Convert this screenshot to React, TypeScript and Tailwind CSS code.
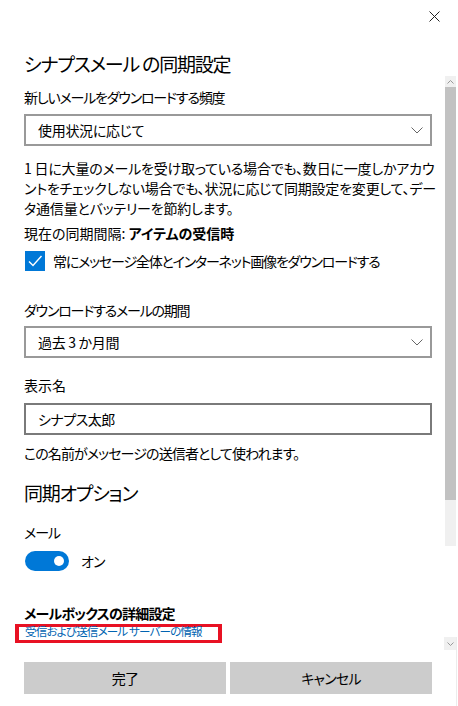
import React, { useState } from "react";

const jp = "font-['Noto_Sans_CJK_JP','Noto_Sans',sans-serif] [font-feature-settings:'palt']";

function Chevron() {
  return (
    <svg width="12" height="7" viewBox="0 0 12 7" fill="none">
      <path d="M0.5 0.5 L6 6 L11.5 0.5" stroke="#666" strokeWidth="1" />
    </svg>
  );
}

function Select({ value }: { value: string }) {
  return (
    <div className="flex h-8 w-[408px] items-center justify-between border-2 border-[#999] bg-white pl-3 pr-[7px]">
      <span className="text-[14px] leading-5 tracking-[-0.3px] text-black">{value}</span>
      <Chevron />
    </div>
  );
}

export default function App() {
  const [checked, setChecked] = useState(true);
  const [mailOn, setMailOn] = useState(true);
  const [name, setName] = useState("シナプス太郎");

  return (
    <div className={`relative h-[706px] w-[458px] overflow-hidden bg-white text-black ${jp}`}>
      {/* close */}
      <div className="flex h-[33px] items-center justify-end pr-[18px]">
        <svg width="11" height="11" viewBox="0 0 11 11" fill="none">
          <path d="M0.5 0.5 L10.5 10.5 M10.5 0.5 L0.5 10.5" stroke="#222" strokeWidth="1" />
        </svg>
      </div>

      <div className="flex flex-col px-6">
        <h1 className="mt-[17px] text-[19px] leading-[28px] tracking-[-1.2px] font-normal">シナプスメール の同期設定</h1>

        <p className="mt-[9px] text-[14px] leading-5 tracking-[-1.2px]">新しいメールをダウンロードする頻度</p>
        <div className="mt-[7px]">
          <Select value="使用状況に応じて" />
        </div>

        <p className="mt-3 text-[14px] leading-5 tracking-[-0.2px] whitespace-nowrap">
          1 日に大量のメールを受け取っている場合でも、数日に一度しかアカウ
          <br />
          ントをチェックしない場合でも、状況に応じて同期設定を変更して、デー
          <br />
          タ通信量とバッテリーを節約します。
        </p>

        <p className="mt-[5px] text-[14px] leading-5">
          現在の同期間隔: <span className="font-bold">アイテムの受信時</span>
        </p>

        <label className="mt-2 flex items-center gap-2 cursor-pointer">
          <button
            type="button"
            onClick={() => setChecked((c) => !c)}
            className={`ml-px flex h-5 w-5 items-center justify-center ${checked ? "bg-[#0078d7]" : "border-2 border-[#333] bg-white"}`}
          >
            {checked && (
              <svg width="20" height="20" viewBox="0 0 20 20" fill="none">
                <path d="M4 10.5 L8 14.5 L16.5 5" stroke="#fff" strokeWidth="1.4" />
              </svg>
            )}
          </button>
          <span className="text-[14px] leading-5 tracking-[-1.2px]">常にメッセージ全体とインターネット画像をダウンロードする</span>
        </label>

        <p className="mt-[29px] text-[14px] leading-5 tracking-[-1.2px]">ダウンロードするメールの期間</p>
        <div className="mt-[6px]">
          <Select value="過去 3 か月間" />
        </div>

        <p className="mt-[17px] text-[14px] leading-5">表示名</p>
        <input
          value={name}
          onChange={(e) => setName(e.target.value)}
          className={`mt-2 h-8 w-[408px] border-2 border-[#7a7a7a] pl-3 text-[14px] tracking-[-0.5px] outline-none ${jp}`}
        />
        <p className="mt-2 text-[14px] leading-5 tracking-[-0.9px]">この名前がメッセージの送信者として使われます。</p>

        <h2 className="mt-4 text-[19px] leading-[28px] tracking-[-1.2px] font-normal">同期オプション</h2>

        <p className="mt-[15px] text-[14px] leading-5 tracking-[-1px]">メール</p>
        <div className="mt-[9px] flex items-center gap-3">
          <button
            type="button"
            onClick={() => setMailOn((v) => !v)}
            className={`ml-px flex h-5 w-11 items-center rounded-full px-[5px] ${mailOn ? "justify-end bg-[#0078d7]" : "justify-start border-2 border-[#333] bg-white"}`}
          >
            <span className={`h-[10px] w-[10px] rounded-full ${mailOn ? "bg-white" : "bg-[#333]"}`} />
          </button>
          <span className="text-[14px] leading-5 tracking-[-0.8px]">{mailOn ? "オン" : "オフ"}</span>
        </div>

        <p className="mt-8 text-[14px] leading-5 tracking-[-0.8px] font-bold">メールボックスの詳細設定</p>
        <div className="mt-px -ml-[9px] h-[19px] w-[207px] border-x-4 border-y-[3px] border-[#e81123]">
          <a href="#" className="-mt-[6px] block pl-[6px] text-[11.5px] leading-5 tracking-[-0.8px] text-[#0063b1] whitespace-nowrap">
            受信および送信メール サーバーの情報
          </a>
        </div>

        <div className="mt-[19px] flex gap-1">
          <button type="button" className="h-8 w-[202px] bg-[#cccccc] text-[14px] tracking-[-0.8px]">完了</button>
          <button type="button" className="h-8 w-[202px] bg-[#cccccc] text-[14px] tracking-[-0.8px]">キャンセル</button>
        </div>
      </div>

      {/* scrollbar */}
      <div className="absolute left-[445px] top-[76px] flex w-[11px] flex-col">
        <div className="flex h-[11px] items-center justify-center bg-[#f0f0f0]">
          <svg width="7" height="4" viewBox="0 0 7 4" fill="none">
            <path d="M0.5 3.5 L3.5 0.5 L6.5 3.5" stroke="#999" strokeWidth="1" />
          </svg>
        </div>
        <div className="h-[413px] bg-[#c2c2c2]" />
        <div className="h-[46px] bg-[#f0f0f0]" />
      </div>
      <div className="absolute left-[444px] top-[637px] flex h-[13px] w-[12px] items-center justify-center bg-[#f0f0f0]">
        <svg width="7" height="4" viewBox="0 0 7 4" fill="none">
          <path d="M0.5 0.5 L3.5 3.5 L6.5 0.5" stroke="#999" strokeWidth="1" />
        </svg>
      </div>
      <div className="absolute left-[456px] top-[637px] h-[69px] w-px bg-[#ececec]" />
    </div>
  );
}
